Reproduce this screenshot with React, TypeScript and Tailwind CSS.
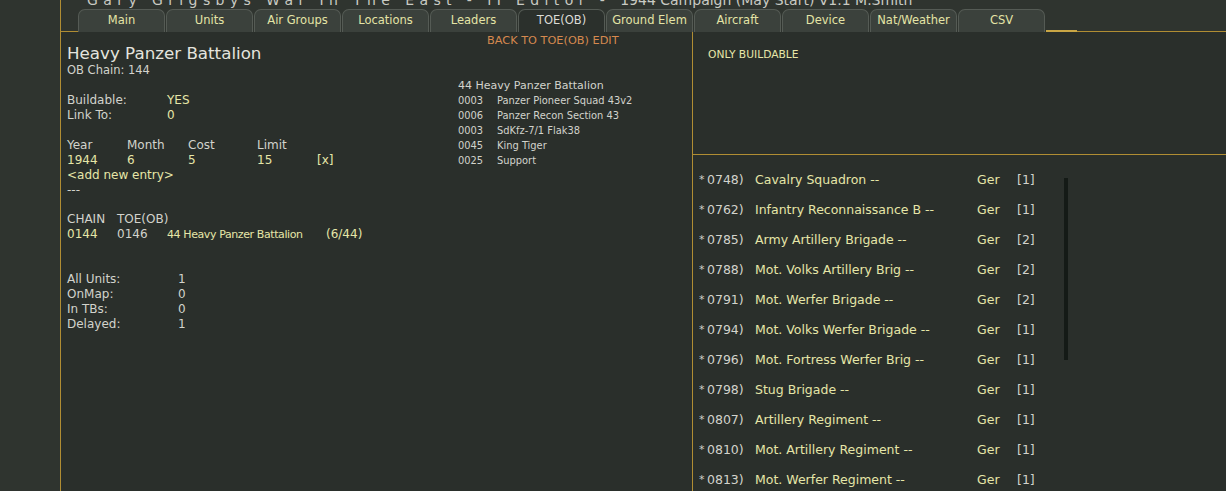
import React from 'react';

const tabs = ['Main', 'Units', 'Air Groups', 'Locations', 'Leaders', 'TOE(OB)', 'Ground Elem', 'Aircraft', 'Device', 'Nat/Weather', 'CSV'];

const toeRows = [
  ['0003', 'Panzer Pioneer Squad 43v2'],
  ['0006', 'Panzer Recon Section 43'],
  ['0003', 'SdKfz-7/1 Flak38'],
  ['0045', 'King Tiger'],
  ['0025', 'Support'],
];

const units = [
  ['0748', 'Cavalry Squadron --', '1'],
  ['0762', 'Infantry Reconnaissance B --', '1'],
  ['0785', 'Army Artillery Brigade --', '2'],
  ['0788', 'Mot. Volks Artillery Brig --', '2'],
  ['0791', 'Mot. Werfer Brigade --', '2'],
  ['0794', 'Mot. Volks Werfer Brigade --', '1'],
  ['0796', 'Mot. Fortress Werfer Brig --', '1'],
  ['0798', 'Stug Brigade --', '1'],
  ['0807', 'Artillery Regiment --', '1'],
  ['0810', 'Mot. Artillery Regiment --', '1'],
  ['0813', 'Mot. Werfer Regiment --', '1'],
];

const counts = [
  ['All Units:', '1'],
  ['OnMap:', '0'],
  ['In TBs:', '0'],
  ['Delayed:', '1'],
];

export default function App() {
  return (
    <div
      className="w-[1226px] h-[491px] flex bg-[#2f342f] overflow-hidden text-[#d2d3cc]"
      style={{ fontFamily: '"DejaVu Sans", Verdana, sans-serif' }}
    >
      {/* left margin */}
      <div className="w-[60px] shrink-0" />

      <div className="flex-1 flex flex-col border-l border-[#b08d33]">
        {/* Header: title + tabs */}
        <div className="h-[32px] flex flex-col">
          <div className="h-[15px] -mt-[7px] shrink-0 pl-[26px] whitespace-nowrap text-[14px] leading-[14px] text-[#c9cac3]">
            <span className="tracking-[5.4px]">Gary Grigsbys War In The East - II Editor -</span>
            <span className="ml-[10px]">1944 Campaign (May Start) V1.1 M.Smith</span>
          </div>
          <div className="flex items-end h-[24px] shrink-0">
            <div className="w-[17px] h-full border-b border-[#b08d33]" />
            {tabs.map((t) => (
              <div
                key={t}
                className={
                  'w-[87px] h-[23px] mr-[1px] rounded-t-[7px] border border-b-0 border-[#555b55] flex items-center justify-center text-[11.5px] ' +
                  (t === 'TOE(OB)' ? 'bg-[#2b302c] text-[#dcdcd6]' : 'bg-[#3b413c] text-[#e4e4a6]')
                }
              >
                {t}
              </div>
            ))}
            <div className="w-[31px] h-full border-b-2 border-[#c9a645]" />
            <div className="flex-1 h-full border-b border-[#b08d33]" />
          </div>
        </div>

        {/* Body */}
        <div className="flex-1 flex bg-[#2a2f2b]">
          {/* Left panel */}
          <div className="w-[632px] border-r border-[#b08d33] flex text-[12px] leading-[15px]">
            <div className="w-[390px] pl-[6px] pt-[10px]">
              <div className="text-[16.7px] leading-[22px] text-[#e4e4de]">Heavy Panzer Battalion</div>
              <div className="-mt-[1px] text-[11.5px]">OB Chain: 144</div>

              <div className="mt-[15px] flex">
                <span className="w-[100px]">Buildable:</span>
                <span className="text-[#e6e6a8]">YES</span>
              </div>
              <div className="flex">
                <span className="w-[100px]">Link To:</span>
                <span className="text-[#e6e6a8]">0</span>
              </div>

              <div className="mt-[15px] flex">
                <span className="w-[60px]">Year</span>
                <span className="w-[61px]">Month</span>
                <span className="w-[69px]">Cost</span>
                <span>Limit</span>
              </div>
              <div className="flex text-[#e6e6a8]">
                <span className="w-[60px]">1944</span>
                <span className="w-[61px]">6</span>
                <span className="w-[69px]">5</span>
                <span className="w-[60px]">15</span>
                <span>[x]</span>
              </div>
              <div className="text-[#e6e6a8]">&lt;add new entry&gt;</div>
              <div>---</div>

              <div className="mt-[14px] flex">
                <span className="w-[50px]">CHAIN</span>
                <span>TOE(OB)</span>
              </div>
              <div className="flex whitespace-nowrap text-[#e6e6a8]">
                <span className="w-[50px] shrink-0">0144</span>
                <span className="w-[50px] shrink-0 text-[#d2d3cc]">0146</span>
                <span className="w-[159px] shrink-0 text-[11px] tracking-[-0.4px]">44 Heavy Panzer Battalion</span>
                <span>(6/44)</span>
              </div>

              <div className="mt-[30px]">
                {counts.map(([k, v]) => (
                  <div key={k} className="flex">
                    <span className="w-[111px]">{k}</span>
                    <span>{v}</span>
                  </div>
                ))}
              </div>
            </div>

            <div className="flex-1 flex flex-col">
              <div className="h-[28px] pt-[1px] pl-[36px] text-[#d5894f] text-[11.3px]">BACK TO TOE(OB) EDIT</div>
              <div className="pl-[7px] pt-[18px] leading-[15px]">
                <div className="text-[11px]">44 Heavy Panzer Battalion</div>
                {toeRows.map(([c, n], i) => (
                  <div key={i} className="flex text-[9.9px]">
                    <span className="w-[39px]">{c}</span>
                    <span>{n}</span>
                  </div>
                ))}
              </div>
            </div>
          </div>

          {/* Right panel */}
          <div className="flex-1 flex flex-col">
            <div className="h-[123px] border-b border-[#b08d33] pl-[15px] pt-[15px] text-[10.7px] text-[#e6e6a8]">
              ONLY BUILDABLE
            </div>
            <div className="flex-1 flex pt-[17px] pl-[6px]">
              <div className="w-[365px] text-[12.5px]">
                {units.map(([code, name, n]) => (
                  <div key={code} className="h-[30px] flex items-start leading-[16px]">
                    <span className="w-[8px] text-[11px]">*</span>
                    <span className="w-[48px]">{code})</span>
                    <span className="w-[222px] text-[#e6e6a8]">{name}</span>
                    <span className="w-[40px] text-[#e6e6a8]">Ger</span>
                    <span>[{n}]</span>
                  </div>
                ))}
              </div>
              <div className="w-[4px] h-[182px] mt-[6px] bg-[#141a16]" />
            </div>
          </div>
        </div>
      </div>
    </div>
  );
}
